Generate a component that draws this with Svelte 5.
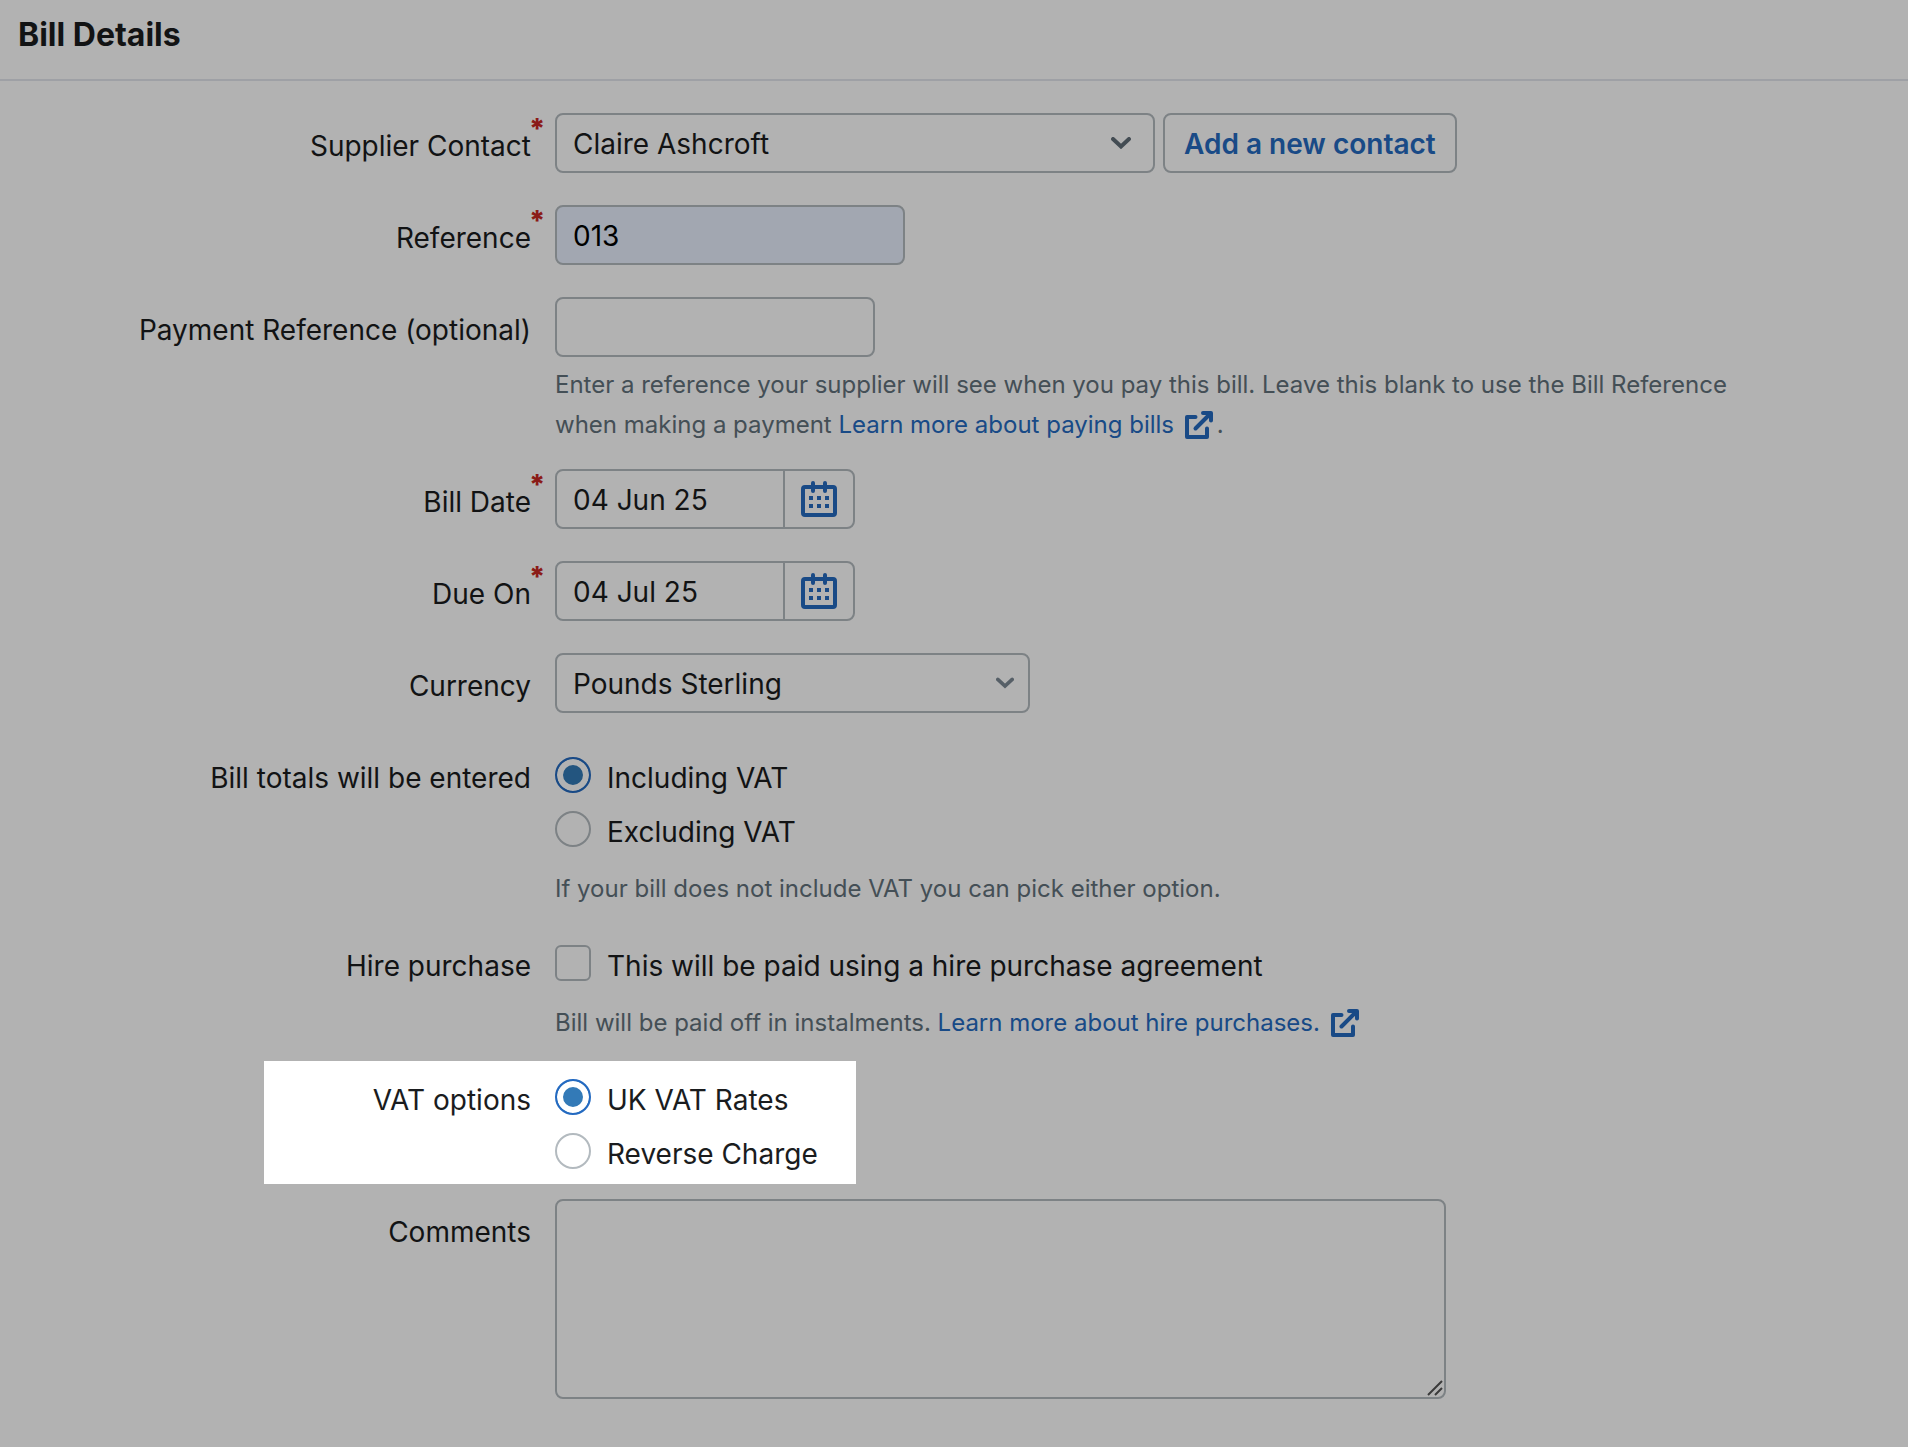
<script lang="ts">
  let supplier = $state('Claire Ashcroft');
  let reference = $state('013');
  let paymentReference = $state('');
  let billDate = $state('04 Jun 25');
  let dueOn = $state('04 Jul 25');
  let currency = $state('Pounds Sterling');
  let totals = $state('including');
  let hirePurchase = $state(false);
  let vat = $state('uk');
  let comments = $state('');
</script>

{#snippet externalIcon()}
  <svg class="external" viewBox="0 0 28 28" aria-hidden="true">
    <path d="M10.5 6H2v20h20v-8.500" stroke-linecap="round" stroke-linejoin="round" />
    <path d="M18 2h8v7.500" stroke-linecap="round" stroke-linejoin="round" />
    <path d="M25 3 10.500 17.500" stroke-linecap="round" />
  </svg>
{/snippet}

{#snippet calendarIcon()}
  <svg class="calendar" viewBox="0 0 36 36" aria-hidden="true">
    <rect x="2" y="6" width="32" height="28" rx="2" />
    <path d="M12 2v8M24 2v8" stroke-linecap="round" />
    <path d="M8 17h4M16 17h4M24 17h4M8 25h4M16 25h4M24 25h4" />
  </svg>
{/snippet}

{#snippet chevron()}
  <svg class="chevron" viewBox="0 0 20 12" aria-hidden="true">
    <path d="M2 2l8 7.500L18 2" />
  </svg>
{/snippet}

<header>
  <h1>Bill Details</h1>
</header>

<form onsubmit={(e) => e.preventDefault()}>
  <div class="row">
    <label class="label required" for="supplier">Supplier Contact</label>
    <div class="field inline">
      <div class="select supplier">
        <select id="supplier" bind:value={supplier}>
          <option>Claire Ashcroft</option>
        </select>
        {@render chevron()}
      </div>
      <button type="button" class="add">Add a new contact</button>
    </div>
  </div>

  <div class="row">
    <label class="label required" for="reference">Reference</label>
    <div class="field">
      <input class="text autofilled" id="reference" type="text" bind:value={reference} />
    </div>
  </div>

  <div class="row">
    <label class="label" for="payment-reference">Payment Reference (optional)</label>
    <div class="field">
      <input class="text payment" id="payment-reference" type="text" bind:value={paymentReference} />
      <p class="help">
        Enter a reference your supplier will see when you pay this bill. Leave this blank to use the Bill Reference
        when making a payment <a href="#paying-bills">Learn more about paying bills {@render externalIcon()}</a>.
      </p>
    </div>
  </div>

  <div class="row">
    <label class="label required" for="bill-date">Bill Date</label>
    <div class="field">
      <div class="date">
        <input id="bill-date" type="text" bind:value={billDate} />
        <button type="button" aria-label="Choose bill date">{@render calendarIcon()}</button>
      </div>
    </div>
  </div>

  <div class="row">
    <label class="label required" for="due-on">Due On</label>
    <div class="field">
      <div class="date">
        <input id="due-on" type="text" bind:value={dueOn} />
        <button type="button" aria-label="Choose due date">{@render calendarIcon()}</button>
      </div>
    </div>
  </div>

  <div class="row">
    <label class="label" for="currency">Currency</label>
    <div class="field">
      <div class="select currency">
        <select id="currency" bind:value={currency}>
          <option>Pounds Sterling</option>
        </select>
        {@render chevron()}
      </div>
    </div>
  </div>

  <div class="row" role="radiogroup" aria-labelledby="totals-label">
    <span class="label" id="totals-label">Bill totals will be entered</span>
    <div class="field">
      <div class="options">
        <label><input type="radio" name="totals" value="including" bind:group={totals} />Including VAT</label>
        <label><input type="radio" name="totals" value="excluding" bind:group={totals} />Excluding VAT</label>
      </div>
      <p class="help spaced">If your bill does not include VAT you can pick either option.</p>
    </div>
  </div>

  <div class="row" role="group" aria-labelledby="hire-label">
    <span class="label" id="hire-label">Hire purchase</span>
    <div class="field">
      <div class="options">
        <label>
          <input type="checkbox" bind:checked={hirePurchase} />This will be paid using a hire purchase agreement
        </label>
      </div>
      <p class="help spaced">
        Bill will be paid off in instalments.
        <a href="#hire-purchases">Learn more about hire purchases. {@render externalIcon()}</a>
      </p>
    </div>
  </div>

  <div class="row" role="radiogroup" aria-labelledby="vat-label">
    <span class="label" id="vat-label">VAT options</span>
    <div class="field">
      <div class="options">
        <label><input type="radio" name="vat" value="uk" bind:group={vat} />UK VAT Rates</label>
        <label><input type="radio" name="vat" value="reverse" bind:group={vat} />Reverse Charge</label>
      </div>
    </div>
    <div class="spotlight"></div>
  </div>

  <div class="row">
    <label class="label" for="comments">Comments</label>
    <div class="field">
      <div class="comments">
        <textarea id="comments" bind:value={comments}></textarea>
        <svg class="grip" viewBox="0 0 16 16" aria-hidden="true">
          <path d="M1 15 15 1M8 15l7-7" />
        </svg>
      </div>
    </div>
  </div>
</form>

<style>
  :global(body) {
    margin: 0;
    background: #fff;
    color: #1a1c1e;
    font: 28px/40px Inter, "Liberation Sans", sans-serif;
  }
  header {
    padding: 15px 18px 24px;
    border-bottom: 2px solid #e3e5ed;
  }
  h1 {
    margin: 0;
    font-size: 32px;
    line-height: 40px;
    font-weight: 700;
  }
  form {
    display: flex;
    flex-direction: column;
    gap: 24px;
    padding: 32px 128px 48px 0;
  }
  .row {
    position: relative;
    display: grid;
    grid-template-columns: 531px minmax(0, 1fr);
    column-gap: 24px;
    min-height: 68px;
  }
  .label {
    position: relative;
    justify-self: end;
    align-self: start;
    line-height: 66px;
  }
  .required::after {
    content: '*';
    position: absolute;
    top: 0;
    left: 100%;
    margin-left: -2px;
    line-height: 32px;
    font-weight: 800;
    color: #c72821;
  }
  .inline {
    display: flex;
    align-items: flex-start;
    gap: 8px;
  }
  input,
  select,
  button,
  textarea {
    box-sizing: border-box;
    margin: 0;
    font: inherit;
    color: inherit;
  }
  .text,
  select,
  textarea,
  .add,
  .date {
    border: 2px solid #b3babf;
    border-radius: 8px;
    background: #fff;
  }
  .text {
    display: block;
    width: 350px;
    height: 60px;
    padding: 2px 16px 0;
  }
  .autofilled {
    background: #e8f0fe;
    color: #000;
  }
  .payment {
    width: 320px;
  }
  .select {
    position: relative;
  }
  select {
    appearance: none;
    display: block;
    width: 100%;
    height: 60px;
    padding: 2px 56px 0 16px;
  }
  .supplier {
    width: 600px;
  }
  .currency {
    width: 475px;
  }
  .chevron {
    position: absolute;
    top: 24px;
    right: 24px;
    width: 20px;
    height: 12px;
    fill: none;
    stroke: #616d78;
    stroke-width: 4;
    stroke-linecap: round;
    pointer-events: none;
  }
  .currency .chevron {
    right: 16px;
    width: 18px;
    stroke: #7b8994;
  }
  .add {
    height: 60px;
    padding: 2px 19px 0;
    font-weight: 600;
    color: #246ac1;
    white-space: nowrap;
    cursor: pointer;
  }
  .date {
    box-sizing: border-box;
    display: flex;
    width: 300px;
    height: 60px;
  }
  .date input {
    flex: 1;
    min-width: 0;
    padding: 2px 16px 0;
    border: 0;
    background: none;
  }
  .date button {
    display: flex;
    align-items: center;
    width: 70px;
    padding: 0 16px;
    border: 0;
    border-left: 2px solid #b3babf;
    background: none;
    cursor: pointer;
  }
  .calendar {
    width: 36px;
    height: 36px;
    fill: none;
    stroke: #246ac1;
    stroke-width: 4;
  }
  .help {
    margin: 8px 0 0;
    font-size: 24px;
    line-height: 40px;
    color: #62717b;
  }
  .spaced {
    margin-top: 16px;
  }
  a {
    color: #246ac1;
    text-decoration: none;
  }
  .external {
    width: 28px;
    height: 28px;
    margin: 0 4px;
    vertical-align: -6px;
    fill: none;
    stroke: currentColor;
    stroke-width: 4;
  }
  .options {
    display: flex;
    flex-direction: column;
    align-items: flex-start;
    gap: 10px;
    padding-top: 10px;
  }
  .options label {
    display: flex;
    align-items: center;
    gap: 16px;
    padding-top: 2px;
    line-height: 42px;
  }
  .options input {
    appearance: none;
    flex: none;
    width: 36px;
    height: 36px;
    margin-bottom: 6px;
    border: 2px solid #b3babf;
    border-radius: 6px;
    background: #fff;
  }
  .options input[type='radio'] {
    border-radius: 50%;
  }
  .options input:checked {
    border-color: #246ac1;
    background: #337ab7;
    box-shadow: inset 0 0 0 6px #fff;
  }
  /* dims the whole page apart from the VAT options */
  .spotlight {
    position: absolute;
    z-index: 1;
    top: -6px;
    bottom: -9px;
    left: 264px;
    width: 592px;
    box-shadow: 0 0 0 9999px rgba(0, 0, 0, 0.3);
    pointer-events: none;
  }
  .comments {
    position: relative;
    max-width: 891px;
  }
  textarea {
    display: block;
    width: 100%;
    height: 200px;
    padding: 12px 16px;
    resize: vertical;
  }
  textarea::-webkit-resizer {
    display: none;
  }
  .grip {
    position: absolute;
    right: 3px;
    bottom: 3px;
    width: 16px;
    height: 16px;
    fill: none;
    stroke: #555;
    stroke-width: 2;
    pointer-events: none;
  }
</style>
